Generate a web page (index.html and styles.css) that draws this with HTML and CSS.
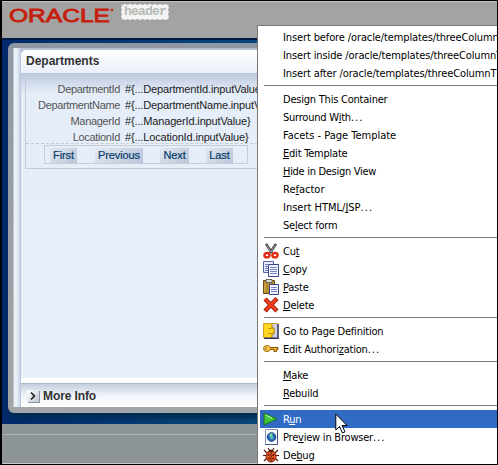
FILE: index.html
```
<!DOCTYPE html>
<html lang="en">
<head>
<meta charset="utf-8">
<title>Page Designer</title>
<link rel="stylesheet" href="styles.css">
</head>
<body>
<div class="frame">
  <header class="banner">
    <svg class="logo" width="106" height="18" viewBox="0 0 106 18"><text x="0" y="15" textLength="101" lengthAdjust="spacingAndGlyphs">ORACLE</text><circle cx="103" cy="3" r="1"/></svg>
    <span class="facet">header</span>
  </header>
  <main class="stage">
    <div class="shell">
      <div class="accordion">
        <h2 class="title">Departments</h2>
        <section class="content">
          <div class="form">
            <div class="fields">
              <span class="label">DepartmentId</span><span>#{...DepartmentId.inputValue</span>
              <span class="label">DepartmentName</span><span>#{...DepartmentName.inputValue</span>
              <span class="label">ManagerId</span><span>#{...ManagerId.inputValue}</span>
              <span class="label">LocationId</span><span>#{...LocationId.inputValue}</span>
            </div>
            <div class="buttons"><b class="first">First</b><b class="previous">Previous</b><b class="next">Next</b><b class="last">Last</b></div>
          </div>
        </section>
        <div class="more"><span class="toggle"><svg width="12" height="12" viewBox="0 0 12 12"><path d="M4 2.5 7.5 6 4 9.5" fill="none" stroke="#111" stroke-width="1.5"/></svg></span>More Info</div>
      </div>
    </div>
  </main>
  <footer class="footer"></footer>
</div>

<nav class="menu">
  <div class="item insert"><span>Insert before /oracle/templates/threeColumn</span></div>
  <div class="item insert"><span>Insert inside /oracle/templates/threeColumnT</span></div>
  <div class="item insert"><span>Insert after /oracle/templates/threeColumnT</span></div>
  <hr>
  <div class="item"><span>Design This Container</span></div>
  <div class="item"><span>Surround W<u>i</u>th<i>...</i></span></div>
  <div class="item loose"><span>Facets - Page Template</span></div>
  <div class="item"><span><u>E</u>dit Template</span></div>
  <div class="item tight"><span><u>H</u>ide in Design View</span></div>
  <div class="item loose"><span>Re<u>f</u>actor</span></div>
  <div class="item loose"><span>Insert HTML/<u>J</u>SP<i>...</i></span></div>
  <div class="item"><span>Se<u>l</u>ect form</span></div>
  <hr>
  <div class="item"><svg viewBox="0 0 16 16"><path d="M3 1 9 10M13 1 7 10" stroke="#444" stroke-width="2.6"/><path d="M3.5 2 8 9M12.5 2 8 9" stroke="#aaa" stroke-width="1"/><g fill="#fff" stroke="#e02a12" stroke-width="2.4"><ellipse cx="4" cy="12.2" rx="2.6" ry="2.2"/><ellipse cx="12" cy="12.2" rx="2.6" ry="2.2"/></g></svg><span>Cu<u>t</u></span></div>
  <div class="item"><svg viewBox="0 0 16 16"><path d="M.5.5h10v11H.5z" fill="#e8ecff" stroke="#5360a8"/><path d="M2 3.5h3M2 5.5h3M2 7.5h3M2 9.5h3" stroke="#7581c8"/><path d="M5.5 3.5h10v12h-10z" fill="#f4f6ff" stroke="#39458f"/><path d="M7 6.5h7M7 8.5h7M7 10.5h7M7 12.5h7" stroke="#7581c8"/></svg><span><u>C</u>opy</span></div>
  <div class="item"><svg viewBox="0 0 16 16"><path d="M.5 1.5h11v13H.5z" fill="#b58a2a" stroke="#6b4a10"/><path d="M3 .5h6v3H3z" fill="#ddd" stroke="#666"/><path d="M2 4v9" stroke="#dcb95a"/><path d="M6.5 5.5h9v10h-9z" fill="#f4f6ff" stroke="#39458f"/><path d="M8 8.5h6M8 10.5h6M8 12.5h6" stroke="#7581c8"/></svg><span><u>P</u>aste</span></div>
  <div class="item"><svg viewBox="0 0 16 16"><path d="M2 2 14 14M14 1.5 2 14" stroke="#8c1c0c" stroke-width="4.400"/><path d="M2 2 13.500 13.500M13.500 2 2.500 13.500" stroke="#f53b1c" stroke-width="2.800"/></svg><span><u>D</u>elete</span></div>
  <hr>
  <div class="item"><svg viewBox="0 0 16 16"><path d="M1 1h14v14H1z" fill="#cfd0e4"/><path d="M1 1h8v4h2v6H9v4H1z" fill="#ffd51e"/><path d="M9 1v4h2v6H9v4" fill="none" stroke="#b07800"/><path d="M.5 15V.5H15" fill="none" stroke="#d0a028"/><path d="M15 1v14.300H1" fill="none" stroke="#303060" stroke-width="1.500"/><path d="M5.500 5.500h3M5.500 10.500h3" stroke="#c08a10"/></svg><span>Go to Page Definition</span></div>
  <div class="item"><svg viewBox="0 0 16 16"><path d="M5 6.500h10v2h-1.500v2H11v-2H6" fill="#f5b827" stroke="#8a5500"/><ellipse cx="4" cy="7.500" rx="3.500" ry="3" fill="#ffd24a" stroke="#a56800"/><circle cx="3" cy="7.500" r="1" fill="#fff" stroke="#8a5500" stroke-width=".7"/></svg><span>Edit Authori<u>z</u>ation<i>...</i></span></div>
  <hr>
  <div class="item"><span><u>M</u>ake</span></div>
  <div class="item"><span><u>R</u>ebuild</span></div>
  <hr>
  <div class="item selected"><svg viewBox="0 0 16 16"><path d="M1 2 14 8 1 14z" fill="#3fc43a" stroke="#14701c"/><path d="M2.500 4 9 7.200" stroke="#a4f09a" stroke-width="1.300"/></svg><span>R<u>u</u>n</span></div>
  <div class="item"><svg viewBox="0 0 16 16"><path d="M2.500.500h12v15h-12z" fill="#fff" stroke="#8a91b5"/><path d="M14.500 1v14.500H2" fill="none" stroke="#4b5484"/><circle cx="8.500" cy="8" r="4.300" fill="#2469bf" stroke="#18407f"/><path d="M6 6q2-3 4-1L9 7l1.500 1L9 11 7.500 8.500z" fill="#70d0a0"/></svg><span>Pre<u>v</u>iew in Browser<i>...</i></span></div>
  <div class="item"><svg viewBox="0 0 16 16"><path d="M1 3 4 6M0 8.500h16M1 14l3-3M15 3l-3 3M15 14l-3-3M5 1l2 3M11 1 9 4" stroke="#5a1a08" stroke-width="1.200"/><ellipse cx="8" cy="9.500" rx="5" ry="5.500" fill="#f05a20" stroke="#7b1c06"/><path d="M4.500 5Q8 0 11.500 5z" fill="#5a1a08"/><path d="M8 5v10" stroke="#5a1a08"/><g fill="#4a1004"><circle cx="5.700" cy="8" r=".9"/><circle cx="10.300" cy="8" r=".9"/><circle cx="5.900" cy="11.500" r=".9"/><circle cx="10.100" cy="11.500" r=".9"/></g></svg><span>De<u>b</u>ug</span></div>
</nav>
<svg class="cursor" width="14" height="22" viewBox="0 0 14 22"><path d="M.8 1v16l3.700-3.500 3 6.500 2.500-1.200-3-6.300h5z" fill="#fff" stroke="#000"/></svg>
</body>
</html>
```
FILE: styles.css
```
* { box-sizing: border-box; }
body { margin: 0; width: 498px; height: 465px; overflow: hidden; position: relative; background: #000; font: 11px "Liberation Sans", sans-serif; }
.frame { width: 498px; height: 465px; display: flex; flex-direction: column; border: 1px solid #000; border-left-width: 2px; background: #a3a3a3; overflow: hidden; }
.banner { height: 37px; flex: none; display: flex; align-items: flex-start; padding: 2px 0 0 7px; border-top: 1px solid #c4c4c4; }
.logo { flex: none; margin: 3px 6px 0 0; overflow: visible; fill: #c6200c; stroke: #c6200c; stroke-width: .8; font: 18px "Liberation Sans", sans-serif; }
.facet { height: 16px; width: 48px; border: 1px dashed #b5b5b5; background: #f4f4f4; color: #b5bab3; text-align: center; font: bold 13px/14px "Liberation Mono", monospace; letter-spacing: -.8px; }
.stage { height: 386px; flex: none; padding: 5px 0 11px 6px; background: linear-gradient(90deg, #00296b, #0a4a7c 55%, #0a4a7c); box-shadow: inset 0 2px #001a48; }
.shell { height: 370px; width: 520px; padding: 5px 0 6px 5px; border-radius: 6px; background: linear-gradient(#8f97a3, #a3a6a6); box-shadow: 2px 5px 5px #002b50; }
.accordion { height: 359px; display: flex; flex-direction: column; padding: 2px 0 0 7px; background: linear-gradient(90deg, #edf1f6 0 2px, #d3dff0 5px, #b5bfd2 7px); border-left: 1px dashed #c4cbd5; }
.title { height: 23px; flex: none; margin: 0; padding-left: 5px; font-size: 12px; line-height: 22px; color: #333; background: linear-gradient(#fff, #e9effa); border-radius: 5px 0 0; }
.content { flex: 1; padding: 5px 0 0 4px; background: linear-gradient(#bec8dd, #e4edf8 20px, #e9f0fa); border-bottom: 5px solid #fff; }
.form { height: 91px; border: 1px solid #c4cbd7; }
.fields { display: grid; height: 65px; grid-template-columns: 94px 220px; grid-template-rows: repeat(4, 16px); column-gap: 5px; padding-top: 2px; line-height: 16px; border-bottom: 1px dashed #c4cbd7; color: #222; letter-spacing: -.15px; white-space: nowrap; }
.label { text-align: right; color: #555; letter-spacing: -.35px; }
.buttons { display: flex; width: 204px; height: 19px; margin: 1px 0 0 18px; padding: 2px 5px; border: 1px solid #c8ced6; }
.buttons b { height: 15px; line-height: 14px; text-align: center; font-weight: normal; letter-spacing: -.1px; color: #073b68; background: linear-gradient(135deg, #e1e8f2, #b9c6da); -webkit-text-stroke: .2px #073b68; }
.first { width: 27px; margin-right: 18px; }
.previous { width: 48px; margin-right: 17px; }
.next { width: 29px; margin-right: 17px; }
.last { width: 27px; }
.more { height: 24px; flex: none; display: flex; align-items: center; padding-left: 6px; font-weight: bold; font-size: 12px; letter-spacing: -.1px; color: #333; border-top: 1px solid #aeb8cb; background: linear-gradient(#c7cfdf, #f1f4fa 12px, #fff); }
.toggle { display: flex; width: 12px; height: 12px; margin-right: 4px; background: linear-gradient(135deg, #fff, #bfc7d6); box-shadow: 1px 1px #8e96a6; }
.footer { flex: 1; background: #8e9599; border-bottom: 1px solid #c8c8c8; }
.footer::before { content: ""; display: block; height: 10px; border-bottom: 1px solid #b0b4b6; }
.menu { position: absolute; left: 257px; top: 25px; width: 240px; height: 439px; overflow: hidden; padding-top: 2px; border: 1px solid #777; border-width: 1px 0 0 1px; background: #fff; color: #000; font-family: "DejaVu Sans Condensed", "DejaVu Sans", sans-serif; font-stretch: condensed; font-size: 11px; letter-spacing: -.22px; }
.item { display: flex; align-items: center; height: 18px; padding-left: 4px; margin-left: 2px; white-space: nowrap; }
.item svg { width: 16px; height: 16px; flex: none; margin-left: -1px; }
.item span { margin-left: 19px; }
.item svg + span { margin-left: 4px; }
.item u { text-underline-offset: 1px; text-decoration-thickness: 1px; text-decoration-skip-ink: none; }
.item i { font-style: normal; letter-spacing: 1px; }
.insert { letter-spacing: -.12px; }
.loose { letter-spacing: 0; }
.tight { letter-spacing: -.3px; }
.menu hr { height: 1px; margin: 3px 0 4px 6px; border: 0; background: #7c7c7c; }
.selected { background: #316ac5; color: #fff; }
.cursor { position: absolute; left: 335px; top: 413px; }
```
